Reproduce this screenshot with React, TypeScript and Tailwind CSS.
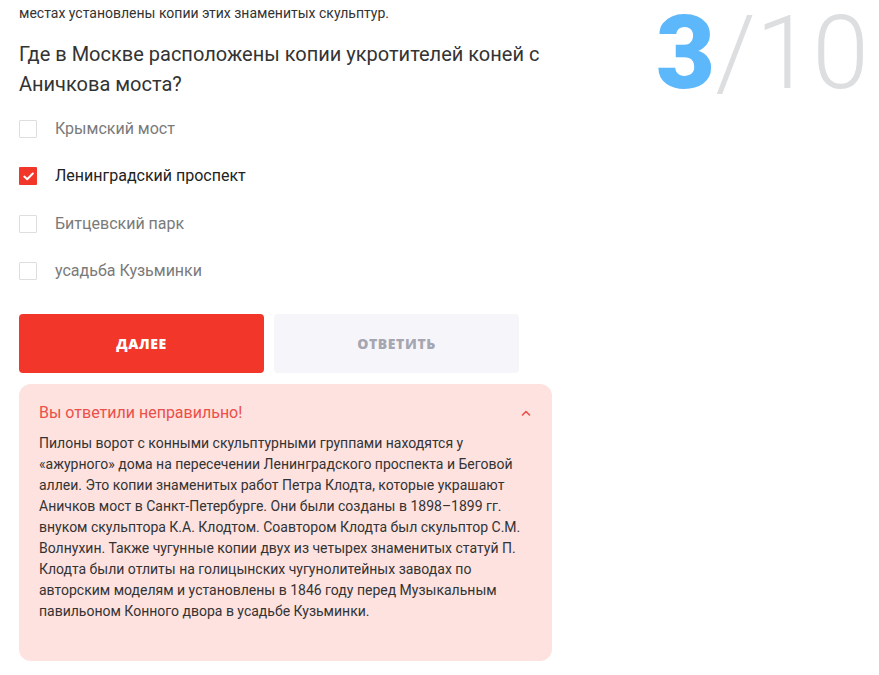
import React, { useState } from "react";

const OPTIONS = [
  "Крымский мост",
  "Ленинградский проспект",
  "Битцевский парк",
  "усадьба Кузьминки",
];

// lines are broken as in the original layout
const EXPLANATION = [
  "Пилоны ворот с конными скульптурными группами находятся у",
  "«ажурного» дома на пересечении Ленинградского проспекта и Беговой",
  "аллеи. Это копии знаменитых работ Петра Клодта, которые украшают",
  "Аничков мост в Санкт-Петербурге. Они были созданы в 1898–1899 гг.",
  "внуком скульптора К.А. Клодтом. Соавтором Клодта был скульптор С.М.",
  "Волнухин. Также чугунные копии двух из четырех знаменитых статуй П.",
  "Клодта были отлиты на голицынских чугунолитейных заводах по",
  "авторским моделям и установлены в 1846 году перед Музыкальным",
  "павильоном Конного двора в усадьбе Кузьминки.",
];

function Checkbox({ checked }: { checked: boolean }) {
  if (checked) {
    return (
      <span className="flex h-[18px] w-[18px] shrink-0 items-center justify-center rounded-[1px] bg-[#f2362a]">
        <svg width="11" height="9" viewBox="0 0 11 9" fill="none">
          <path
            d="M1.3 4.6L4.2 7.3L9.8 1.5"
            stroke="white"
            strokeWidth="2"
            strokeLinecap="round"
            strokeLinejoin="round"
          />
        </svg>
      </span>
    );
  }
  return (
    <span className="h-[18px] w-[18px] shrink-0 rounded-[1px] border border-[#dedede] bg-white" />
  );
}

export default function App() {
  const [selected, setSelected] = useState(1);
  const [open, setOpen] = useState(true);

  return (
    <div className="flex min-h-[675px] overflow-hidden bg-white font-['Roboto',sans-serif] text-[#333]">
      <main className="ml-[19px] w-[533px] shrink-0">
        <p className="-mt-[18px] text-[14px] leading-[21px] text-[#333]">
          Скульптурные группы «Укротители коней» украшают не только Петербург.
          <br />
          местах установлены копии этих знаменитых скульптур.
        </p>

        <h2 className="mt-[15px] text-[20px] leading-[30px] text-[#333]">
          Где в Москве расположены копии укротителей коней с Аничкова моста?
        </h2>

        <div className="mt-[6px] flex flex-col">
          {OPTIONS.map((o, i) => (
            <label
              key={i}
              onClick={() => setSelected(i)}
              className="flex h-[47.5px] cursor-pointer items-center gap-[18px]"
            >
              <Checkbox checked={selected === i} />
              <span
                className={
                  selected === i
                    ? "text-[16px] text-[#222]"
                    : "text-[16px] text-[#7a7a7a]"
                }
              >
                {o}
              </span>
            </label>
          ))}
        </div>

        <div className="mt-[19px] flex gap-[10px]">
          <button
            type="button"
            className="h-[59px] w-[245px] rounded-[4px] bg-[#f2362a] font-['Open_Sans',sans-serif] text-[14px] font-extrabold tracking-[0.6px] text-white"
          >
            ДАЛЕЕ
          </button>
          <button
            type="button"
            className="h-[59px] w-[245px] rounded-[4px] bg-[#f6f6fa] font-['Open_Sans',sans-serif] text-[14px] font-extrabold tracking-[0.6px] text-[#a6a6b2]"
          >
            ОТВЕТИТЬ
          </button>
        </div>

        <section className="mt-[11px] rounded-[12px] bg-[#fde2e0] px-[20px] pt-[18px] pb-[39px]">
          <button
            type="button"
            onClick={() => setOpen(!open)}
            className="flex w-full items-center justify-between text-left"
          >
            <span className="text-[16px] leading-[22px] text-[#ec4f48]">
              Вы ответили неправильно!
            </span>
            <svg
              width="10"
              height="6"
              viewBox="0 0 10 6"
              fill="none"
              className={open ? "mr-[1px]" : "mr-[1px] rotate-180"}
            >
              <path
                d="M1.5 5L5 1.5L8.5 5"
                stroke="#ec4f48"
                strokeWidth="1.6"
                strokeLinecap="round"
                strokeLinejoin="round"
              />
            </svg>
          </button>
          {open && (
            <p className="mt-[9px] text-[14px] leading-[21px] text-[#333]">
              {EXPLANATION.map((line, i) => (
                <span key={i} className="block whitespace-nowrap">
                  {line}
                </span>
              ))}
            </p>
          )}
        </section>
      </main>

      <div className="ml-[104px] -mt-[7px] whitespace-nowrap font-['Roboto',sans-serif] text-[102px] leading-[120px]">
        <span className="font-black text-[#5db8fb]">3</span>
        <span className="font-light text-[#dcdee0]">/10</span>
      </div>
    </div>
  );
}
